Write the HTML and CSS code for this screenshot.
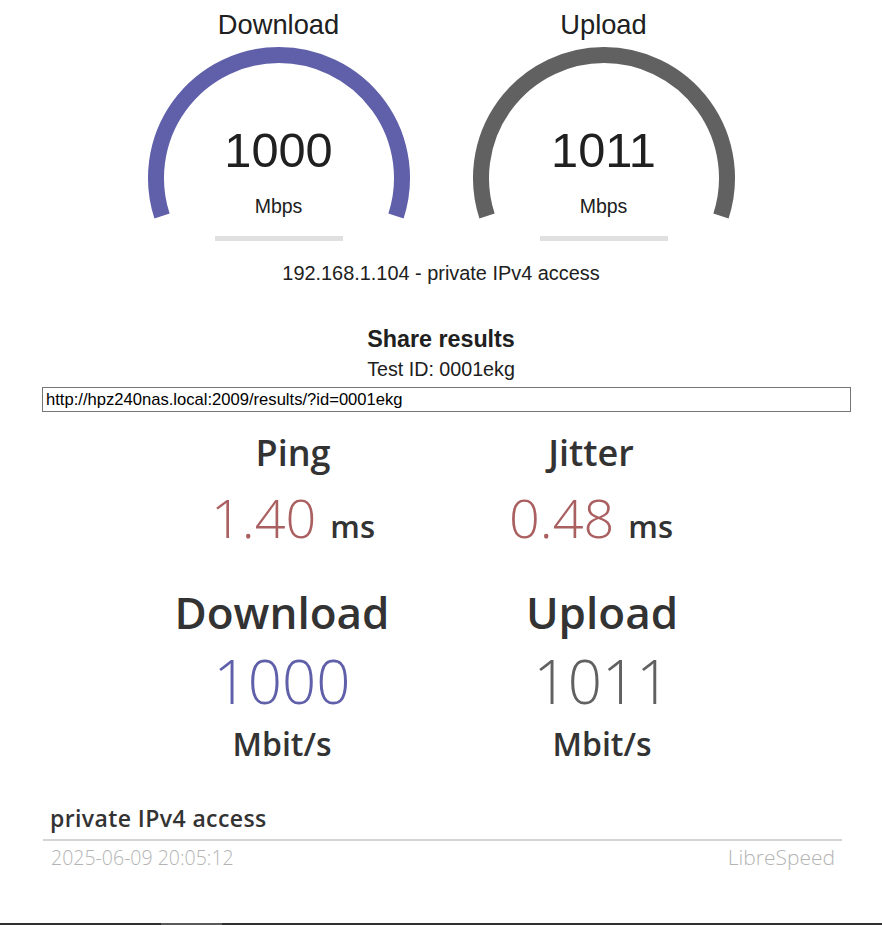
FILE: index.html
```html
<!DOCTYPE html>
<html lang="en">
<head>
<meta charset="utf-8">
<title>LibreSpeed</title>
<link rel="stylesheet" href="styles.css">
</head>
<body>
<div class="gauges">
  <div class="gauge">
    <div class="gauge-title">Download</div>
    <div class="meter">
      <svg class="meter-svg" width="300" height="206" viewBox="0 0 300 206">
        <path d="M 33.02 175.01 A 123 123 0 1 1 266.98 175.01" fill="none" stroke="#6060AA" stroke-width="16"/>
        <rect x="86" y="195" width="128" height="5" fill="#E0E0E0"/>
      </svg>
      <div class="meter-value">1000</div>
      <div class="meter-unit">Mbps</div>
    </div>
  </div>
  <div class="gauge">
    <div class="gauge-title">Upload</div>
    <div class="meter">
      <svg class="meter-svg" width="300" height="206" viewBox="0 0 300 206">
        <path d="M 33.02 175.01 A 123 123 0 1 1 266.98 175.01" fill="none" stroke="#616161" stroke-width="16"/>
        <rect x="86" y="195" width="128" height="5" fill="#E0E0E0"/>
      </svg>
      <div class="meter-value">1011</div>
      <div class="meter-unit">Mbps</div>
    </div>
  </div>
</div>
<div class="ip">192.168.1.104 - private IPv4 access</div>
<div class="share-title">Share results</div>
<div class="test-id">Test ID: 0001ekg</div>
<input class="share-url" type="text" value="http://hpz240nas.local:2009/results/?id=0001ekg" readonly>
<div class="results">
  <div class="res-grid row1">
    <div class="res-cell">
      <div class="res-title">Ping</div>
      <div class="res-value small"><span class="num">1.40</span> <span class="unit-inline">ms</span></div>
    </div>
    <div class="res-cell">
      <div class="res-title">Jitter</div>
      <div class="res-value small"><span class="num">0.48</span> <span class="unit-inline">ms</span></div>
    </div>
  </div>
  <div class="res-grid row2">
    <div class="res-cell">
      <div class="res-title big">Download</div>
      <div class="res-value large dl">1000</div>
      <div class="res-unit">Mbit/s</div>
    </div>
    <div class="res-cell">
      <div class="res-title big">Upload</div>
      <div class="res-value large ul">1011</div>
      <div class="res-unit">Mbit/s</div>
    </div>
  </div>
  <div class="res-isp">private IPv4 access</div>
  <div class="res-line"></div>
  <div class="res-foot">
    <span>2025-06-09 20:05:12</span>
    <span class="brand">LibreSpeed</span>
  </div>
</div>
<div class="bottom-bar"><div class="bottom-thumb"></div></div>
</body>
</html>
```
FILE: styles.css
```css
html, body {
  margin: 0;
  padding: 0;
  background: #fff;
}
body {
  padding-top: 9px;
  font-family: "Liberation Sans", Arial, sans-serif;
  color: #202020;
}
.gauges {
  display: flex;
  justify-content: center;
  gap: 25px;
}
.gauge {
  width: 300px;
  text-align: center;
}
.gauge-title {
  font-size: 27.3px;
  line-height: 32px;
}
.meter {
  position: relative;
  height: 206px;
}
.meter-svg {
  position: absolute;
  left: 0;
  top: 0;
}
.meter-value {
  position: relative;
  padding-top: 81px;
  font-size: 48.75px;
  line-height: 56px;
}
.meter-unit {
  position: relative;
  margin-top: 16px;
  font-size: 19.5px;
  line-height: 24px;
}
.ip {
  margin-top: 14px;
  text-align: center;
  font-size: 19.9px;
  line-height: 24px;
}
.share-title {
  margin-top: 41px;
  text-align: center;
  font-size: 23.3px;
  font-weight: bold;
  line-height: 27px;
}
.test-id {
  margin-top: 4px;
  text-align: center;
  font-size: 19.7px;
  line-height: 24px;
}
.share-url {
  display: block;
  box-sizing: border-box;
  margin: 6px 0 0 42px;
  width: 809px;
  height: 25px;
  padding: 0 3px;
  border: 1px solid #767676;
  border-radius: 0;
  font-family: "Liberation Sans", Arial, sans-serif;
  font-size: 16.6px;
  color: #000;
  outline: none;
}
.results {
  width: 800px;
  margin-left: 42px;
  padding-top: 19px;
  font-family: "Open Sans", sans-serif;
  color: #333;
}
.res-grid {
  display: grid;
  justify-content: center;
  text-align: center;
}
.row1 {
  grid-template-columns: 298px 298px;
}
.row2 {
  grid-template-columns: 320px 320px;
  margin-top: 43px;
}
.res-title {
  font-size: 36px;
  font-weight: 600;
  line-height: 44px;
}
.res-title.big {
  font-size: 44px;
  line-height: 50px;
}
.res-value {
  font-weight: 300;
}
.res-value.small {
  margin-top: 15px;
  height: 54px;
  font-size: 54px;
  line-height: 54px;
  color: #AA6060;
}
.res-value.large {
  margin-top: 13px;
  height: 62px;
  font-size: 60px;
  line-height: 62px;
}
.unit-inline {
  font-size: 31px;
  font-weight: 600;
  line-height: 1;
  color: #333;
}
.dl {
  color: #6060AA;
}
.ul {
  color: #616161;
}
.res-unit {
  margin-top: 12px;
  font-size: 32px;
  font-weight: 600;
  line-height: 40px;
}
.res-isp {
  margin-top: 39px;
  padding-left: 8px;
  font-size: 23px;
  font-weight: 600;
  line-height: 30px;
  letter-spacing: 0.4px;
}
.res-line {
  margin-top: 6px;
  margin-left: 1px;
  height: 2px;
  background: #d4d4d4;
}
.res-foot {
  display: flex;
  justify-content: space-between;
  align-items: baseline;
  height: 24px;
  margin-top: 4px;
  padding: 0 7px 0 9px;
  font-size: 19.5px;
  font-weight: 300;
  line-height: 24px;
  color: #b4b4b4;
}
.brand {
  font-size: 21px;
}
.bottom-bar {
  margin-top: 54px;
  height: 3px;
  background: #2f2f2f;
}
.bottom-thumb {
  margin-left: 161px;
  width: 61px;
  height: 3px;
  background: #5a5a5a;
}
```
